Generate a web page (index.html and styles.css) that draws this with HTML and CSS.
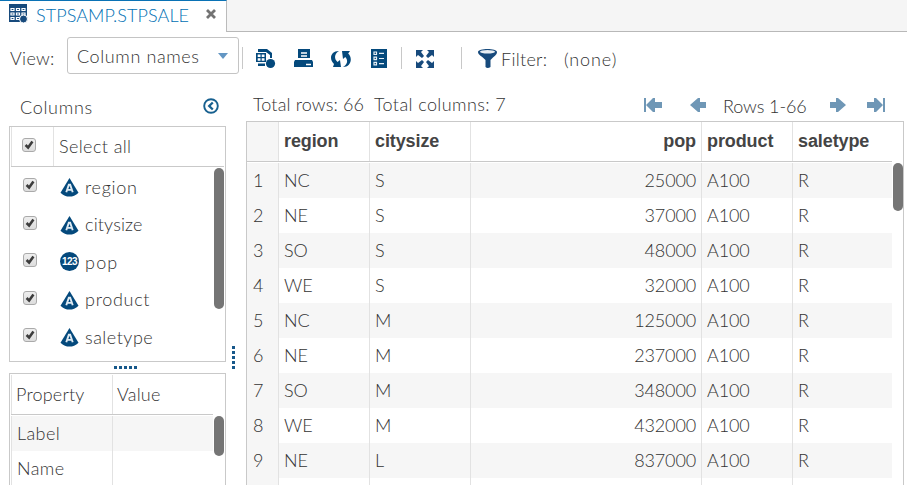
FILE: index.html
```html
<!DOCTYPE html>
<html lang="en">
<head>
<meta charset="utf-8">
<title>STPSAMP.STPSALE</title>
<link rel="stylesheet" href="styles.css">
</head>
<body>
<svg class="defs" width="0" height="0">
  <symbol id="char" viewBox="0 0 20 20"><path fill="#04497c" d="M10 0 19.500 15.500Q15 19.600 10 19.600T.5 15.500Z"/><path fill="none" stroke="#dfeaf2" stroke-width="2" d="M6.600 15 9.300 7h1.400l2.700 8M8 12.500h4"/></symbol>
  <symbol id="arrow" viewBox="0 0 16 14"><path fill="#6f97b6" d="M0 7 8 0h2v4h6v6h-6v4H8Z"/></symbol>
</svg>
<header class="tabs">
  <div class="tab">
    <svg class="tab-icon" width="19" height="20" viewBox="0 0 19 20"><path fill="#174a7c" d="M0 0h18v13h-6v5H0Z"/><path fill="none" stroke="#fff" stroke-width="1.200" d="M2 4.500h3v2H2ZM7.500 4.500h3v2h-3ZM13 4.500h3v2h-3ZM2 9h3v2H2ZM7.500 9h3v2h-3ZM13 9h3v2h-3ZM2 13.500h3v2H2ZM7.500 13.500h3v2h-3Z"/><circle cx="14.500" cy="15" r="4" fill="#174a7c" stroke="#fff"/></svg>
    <span class="tab-name">STPSAMP.STPSALE</span>
    <svg class="close" width="10" height="10" viewBox="0 0 10 10"><path stroke="#737373" stroke-width="2.800" d="m1 1 8 8M9 1 1 9"/></svg>
  </div>
  <div class="tab-rest"></div>
</header>
<div class="toolbar">
  <span class="view">View:</span>
  <div class="select"><span>Column names</span><svg width="10" height="6" viewBox="0 0 10 6"><path fill="#6396c3" d="M0 0h10L5 6Z"/></svg></div>
  <i class="sep"></i>
  <svg class="i-table" width="20" height="20" viewBox="0 0 20 20"><path fill="#04497c" d="M2 0h9l5 4v5h-2V6l-4-3H2ZM0 4h10v9H0ZM2 14.500h7V17H2Z"/><path fill="#fff" d="M1.700 5.500h2.800v2.400H1.700Zm4 0h2.800v2.400H5.700Zm-4 3.800h2.800v2.400H1.700Zm4 0h2.800v2.400H5.700Z"/><circle cx="14.500" cy="14.500" r="4.600" fill="#04497c"/></svg>
  <svg class="i-print" width="20" height="19" viewBox="0 0 20 19"><path fill="#04497c" d="M4 0h12v9H4ZM1 11h17l1 2v5H0v-5Z"/><path stroke="#fff" stroke-width="1.300" d="M7 4h6M7 7h6M12 15.500h5"/></svg>
  <svg class="i-sync" width="20" height="18" viewBox="0 0 20 18"><path fill="#04497c" d="M8 1C-1 1-2 10 3 14l-1 3 8 0-1-7-2.500 2C3 9 3 4 8 1ZM11 1h8l-1.800 2.500C22 8 20 17 12 17c5-3 5-7 2.300-10L12 9Z"/></svg>
  <svg class="i-list" width="16" height="19" viewBox="0 0 16 19"><path fill="#04497c" d="M0 0h16v19H0Z"/><path fill="none" stroke="#e7eff5" stroke-width="1.200" d="M3 3h2.500v2.500H3ZM3 8.200h2.500v2.500H3ZM3 13.400h2.500v2.500H3ZM8 4.300h5M8 9.500h5M8 14.700h5"/></svg>
  <i class="sep sep2"></i>
  <svg class="i-full" width="18" height="18" viewBox="0 0 18 18"><path fill="#174a7c" d="M0 0h7L5 2l3 4-2 2-4-3-2 2ZM18 0v7l-2-2-4 3-2-2 3-4-2-2ZM0 18v-7l2 2 4-3 2 2-3 4 2 2ZM18 18h-7l2-2-3-4 2-2 4 3 2-2Z"/></svg>
  <i class="sep sep3"></i>
  <svg class="i-filter" width="19" height="19" viewBox="0 0 19 19"><path fill="#174a7c" d="M0 3C0-1 19-1 19 3c0 3-3 4-6.500 8v7q-3 1.800-5 0v-7C4 7 0 6 0 3Z"/><ellipse cx="9.500" cy="2.800" rx="7.500" ry="1.700" fill="#e8eef3"/></svg>
  <span class="filter">Filter:</span><span class="none">(none)</span>
</div>
<main class="main">
  <aside class="side">
    <div class="side-head"><span>Columns</span><svg width="16" height="16" viewBox="0 0 16 16"><circle cx="8" cy="8" r="6.800" fill="none" stroke="#17608f" stroke-width="1.900"/><path fill="none" stroke="#17608f" stroke-width="2.300" d="M9.800 4.500 6.200 8l3.600 3.500"/></svg></div>
    <section class="columns">
      <div class="all"><span class="all-check"><b class="check"><svg viewBox="0 0 14 14"><path d="m3 7 3 3 5-7"/></svg></b></span><span class="all-label">Select all</span></div>
      <div class="list">
        <ul>
          <li><b class="check"><svg viewBox="0 0 14 14"><path d="m3 7 3 3 5-7"/></svg></b><svg class="type"><use href="#char"/></svg><span class="wide">region</span></li>
          <li><b class="check"><svg viewBox="0 0 14 14"><path d="m3 7 3 3 5-7"/></svg></b><svg class="type"><use href="#char"/></svg><span class="tight">citysize</span></li>
          <li><b class="check"><svg viewBox="0 0 14 14"><path d="m3 7 3 3 5-7"/></svg></b><span class="type num">123</span><span class="pop">pop</span></li>
          <li><b class="check"><svg viewBox="0 0 14 14"><path d="m3 7 3 3 5-7"/></svg></b><svg class="type"><use href="#char"/></svg><span class="wide">product</span></li>
          <li><b class="check"><svg viewBox="0 0 14 14"><path d="m3 7 3 3 5-7"/></svg></b><svg class="type"><use href="#char"/></svg><span>saletype</span></li>
        </ul>
        <div class="thumb"></div>
      </div>
    </section>
    <div class="hsplit"></div>
    <section class="props">
      <div class="prop prop-head"><span>Property</span><span>Value</span></div>
      <div class="prop-body">
        <div class="prop-rows"><div class="prop shade"><span>Label</span><span></span></div><div class="prop"><span>Name</span><span></span></div></div>
        <div class="thumb"></div>
      </div>
    </section>
  </aside>
  <div class="vsplit"></div>
  <section class="data">
    <div class="status"><span class="rows-total">Total rows: 66</span><span class="cols-total">Total columns: 7</span>
      <svg class="first" width="18" height="14" viewBox="0 0 18 14"><path fill="#6f97b6" d="M0 0h2v14H0ZM2 7l7-7h2v4h7v6h-7v4H9Z"/></svg>
      <svg class="prev" width="16" height="14"><use href="#arrow"/></svg>
      <span class="range">Rows 1-66</span>
      <svg class="next" width="16" height="14"><use href="#arrow"/></svg>
      <svg class="last" width="18" height="14" viewBox="0 0 18 14"><path fill="#6f97b6" d="M18 0h-2v14h2ZM16 7 9 0H7v4H0v6h7v4h2Z"/></svg>
    </div>
    <div class="grid">
      <div class="row head"><span></span><span>region</span><span>citysize</span><span>pop</span><span>product</span><span>saletype</span></div>
      <div class="body">
        <div class="rows">
          <div class="row"><span>1</span><span>NC</span><span>S</span><span>25000</span><span>A100</span><span>R</span></div>
          <div class="row"><span>2</span><span>NE</span><span>S</span><span>37000</span><span>A100</span><span>R</span></div>
          <div class="row"><span>3</span><span>SO</span><span>S</span><span>48000</span><span>A100</span><span>R</span></div>
          <div class="row"><span>4</span><span>WE</span><span>S</span><span>32000</span><span>A100</span><span>R</span></div>
          <div class="row"><span>5</span><span>NC</span><span>M</span><span>125000</span><span>A100</span><span>R</span></div>
          <div class="row"><span>6</span><span>NE</span><span>M</span><span>237000</span><span>A100</span><span>R</span></div>
          <div class="row"><span>7</span><span>SO</span><span>M</span><span>348000</span><span>A100</span><span>R</span></div>
          <div class="row"><span>8</span><span>WE</span><span>M</span><span>432000</span><span>A100</span><span>R</span></div>
          <div class="row"><span>9</span><span>NE</span><span>L</span><span>837000</span><span>A100</span><span>R</span></div>
          <div class="row partial"><span></span><span></span><span></span><span></span><span></span><span></span></div>
        </div>
        <div class="thumb"></div>
      </div>
    </div>
  </section>
</main>
</body>
</html>
```
FILE: styles.css
```css
* { box-sizing: border-box; }
body { margin: 0; width: 907px; height: 485px; overflow: hidden; display: flex; flex-direction: column; background: #fff; color: #333; font: 300 18px/24px Lato, sans-serif; white-space: nowrap; }
svg { display: block; flex: none; }
.defs { position: absolute; }
.tabs { display: flex; height: 32px; flex: none; }
.tab { width: 227px; display: flex; align-items: flex-start; border-top: 1px solid #0a72b5; border-right: 1px solid #bbb; padding-left: 9px; }
.tab-icon { margin-top: 3px; }
.tab-name { margin: 2px 0 0 8px; width: 153px; color: #0070b4; font-size: 18px; letter-spacing: .08px; }
.close { margin: 8px 0 0 17px; }
.tab-rest { flex: 1; background: #f5f5f5; border-bottom: 1px solid #b8b8b8; }
.toolbar { height: 53px; flex: none; display: flex; align-items: flex-start; }
.view { margin: 14px 0 0 10px; width: 57px; letter-spacing: .3px; }
.select { width: 172px; height: 37px; margin-top: 5px; padding: 0 10px 0 9px; display: flex; align-items: center; justify-content: space-between; border: 1px solid #c4c4c4; border-radius: 3px; letter-spacing: .6px; }
.sep { width: 1px; height: 22px; margin: 15px 0 0 3px; background: #c8c8c8; }
.i-table { margin: 17px 0 0 13px; }
.i-print { margin: 17px 0 0 18px; }
.i-sync { margin: 18px 0 0 17px; }
.i-list { margin: 17px 0 0 20px; }
.sep2 { margin-left: 14px; }
.i-full { margin: 18px 0 0 14px; }
.sep3 { margin-left: 27px; }
.i-filter { margin: 17px 0 0 16px; }
.filter { margin: 15px 0 0 4px; width: 63px; letter-spacing: .3px; }
.none { margin-top: 15px; letter-spacing: .9px; }
.main { display: flex; flex: 1; min-height: 0; }
.side { width: 217px; margin-left: 9px; flex: none; display: flex; flex-direction: column; }
.side-head { height: 41px; flex: none; display: flex; justify-content: space-between; padding: 10px 7px 0 11px; letter-spacing: .7px; }
.side-head svg { margin-top: 3px; }
.columns { height: 236px; flex: none; border: 1px solid #c9c9c9; }
.all { display: flex; height: 40px; margin: 0 1px; border-bottom: 1px solid #c9c9c9; }
.all-check { width: 43px; border: solid #e2e2e2; border-width: 0 1px; padding: 11px 0 0 10px; }
.all-label { padding: 7px 0 0 5px; letter-spacing: .4px; }
.check { display: block; width: 14px; height: 14px; flex: none; border: 1px solid #aaa; border-radius: 3px; background: linear-gradient(#eee, #ddd); }
.check svg { width: 12px; height: 12px; }
.check path { fill: none; stroke: #3c3c3c; stroke-width: 3; }
.list { display: flex; justify-content: space-between; padding: 1px 1px 0 13px; }
.list ul { margin: 0; padding: 0; list-style: none; }
.list li { height: 37.500px; display: flex; padding-top: 7px; letter-spacing: .5px; }
.list li > span:last-child { margin-top: -.5px; }
.list .check { margin-top: 3px; }
.type { width: 19px; height: 19px; margin: 3px 6px 0 23px; }
.num { margin-top: 2px; border-radius: 50%; background: #04497c; color: #fff; font: bold 10px/19px "Liberation Sans", sans-serif; letter-spacing: -.5px; text-align: center; }
.wide { letter-spacing: .7px; }
.pop { letter-spacing: 1.200px; }
.tight { letter-spacing: .15px; }
.thumb { width: 10px; background: #757575; border-radius: 5px; flex: none; }
.list .thumb { height: 141px; }
.hsplit { width: 23px; height: 3px; margin: 4px 0 4px 105px; flex: none; background: repeating-linear-gradient(90deg, #17588a 0 3px, transparent 3px 5px); }
.props { flex: 1; min-height: 0; overflow: hidden; border: 1px solid #c9c9c9; border-bottom: 0; padding: 1px 1px 0; }
.prop { display: flex; height: 35px; letter-spacing: .4px; }
.prop span { width: 101px; border-left: 1px solid #e2e2e2; padding: 5px 0 0 5px; }
.prop span + span { flex: 1; }
.prop-head { height: 40px; width: 202px; border-bottom: 1px solid #c9c9c9; letter-spacing: .2px; }
.prop-head span { padding-top: 7px; padding-left: 4px; }
.prop-body { display: flex; justify-content: space-between; padding-top: 1px; }
.prop-rows { width: 202px; }
.shade { background: #f6f6f6; }
.prop-body .thumb { height: 40px; }
.vsplit { width: 3px; height: 23px; margin: 261px 11px 0 6px; flex: none; background: repeating-linear-gradient(#17588a 0 3px, transparent 3px 5px); }
.data { width: 658px; flex: none; display: flex; flex-direction: column; }
.status { height: 36px; flex: none; display: flex; padding: 7px 0 0 7px; }
.rows-total { width: 121px; letter-spacing: .15px; }
.cols-total { width: 270px; letter-spacing: .4px; }
.status svg { margin-top: 6px; }
.prev { margin-left: 28px; }
.range { margin: 2px 0 0 17px; width: 107px; letter-spacing: -.1px; }
.next { transform: scaleX(-1); }
.last { margin-left: 21px; }
.grid { flex: 1; min-height: 0; border: 1px solid #c9c9c9; border-bottom: 0; }
.row { width: 645px; height: 35px; display: grid; grid-template-columns: 32px 91px 101px 231px 91px 99px; }
.row span { border-right: 1px solid #e2e2e2; padding: 5px 5px 0; }
.row span:last-child { border: 0; }
.row span:first-child { background: #f6f6f6; padding-left: 6px; }
.row span:nth-child(4) { text-align: right; }
.row.head { height: 40px; border-bottom: 1px solid #c9c9c9; color: #444; font: bold 18px/24px "Liberation Sans", sans-serif; letter-spacing: -.1px; }
.row.head span { padding-top: 7px; }
.body { display: flex; justify-content: space-between; padding-top: 1px; }
.rows { letter-spacing: -.15px; }
.rows .row:nth-child(odd) { background: #f6f6f6; }
.rows .partial { height: 7px; }
.body .thumb { height: 48px; }
```
